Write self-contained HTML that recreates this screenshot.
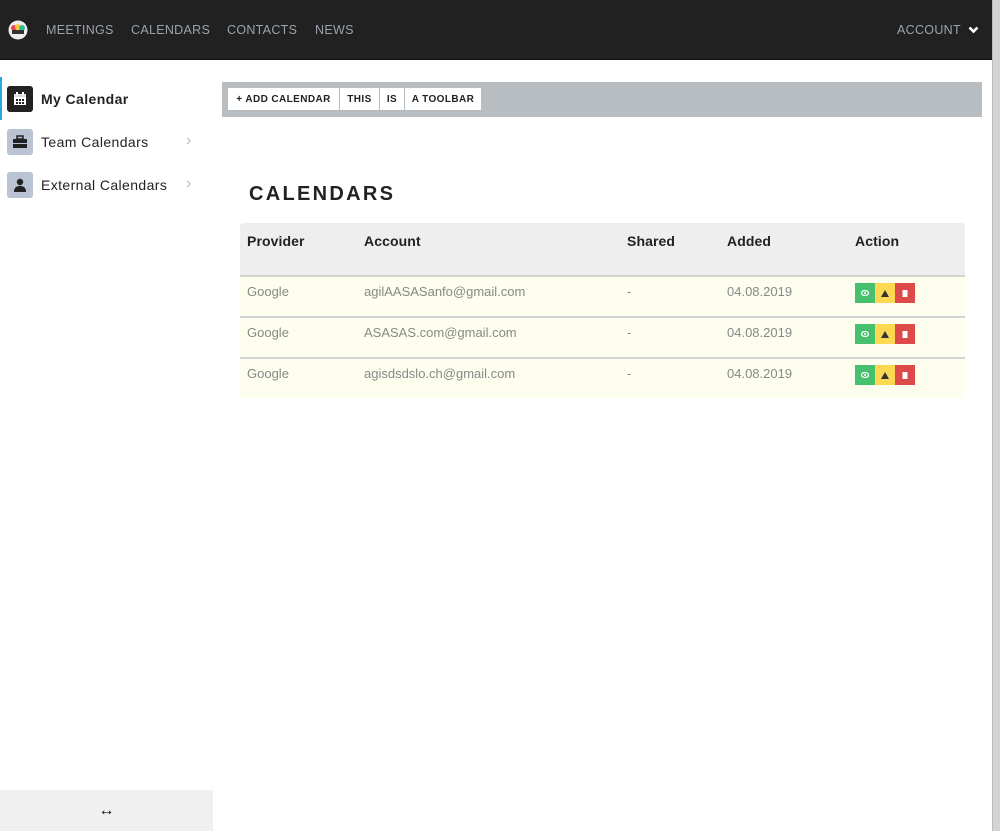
<!DOCTYPE html>
<html><head><meta charset="utf-8"><style>
*{box-sizing:border-box;margin:0;padding:0}
body{width:1000px;height:831px;overflow:hidden;background:#fff;font-family:"Liberation Sans",sans-serif;position:relative}
.nav{position:absolute;left:0;top:0;width:992px;height:60px;background:#212121;border-bottom:1px solid #111}
.nav a{position:absolute;top:23px;color:#9aa3ad;font-size:12.5px;letter-spacing:0.3px}
.sb{position:absolute;right:0;top:0;width:8px;height:831px;background:#d4d4d4;border-left:1px solid #bbb}
.side .it{position:absolute;left:7px;height:26px;display:flex;align-items:center}
.ic{width:26px;height:26px;border-radius:3px;background:#b9c3d3;display:flex;align-items:center;justify-content:center}
.it span{margin-left:8px;font-size:14px;color:#222;letter-spacing:0.4px}
.chev{position:absolute;left:186px;color:#bbb;font-size:16px}
.tb{position:absolute;left:222px;top:82px;width:760px;height:35px;background:#b8bdc2}
.btn{position:absolute;top:6px;height:22px;background:#fff;font-size:10px;font-weight:bold;color:#222;letter-spacing:0.4px;line-height:24px;text-align:center}
h1{position:absolute;left:249px;top:183px;font-size:20px;letter-spacing:2.3px;color:#222;font-weight:bold}
.tbl{position:absolute;left:240px;top:223px;width:725px}
.hd{height:52px;background:#eee;border-radius:4px 4px 0 0;position:relative}
.hd div{position:absolute;top:10px;font-size:14px;font-weight:bold;color:#222;letter-spacing:0.1px}
.row{height:41px;background:#fefeee;border-top:2px solid #d3d3d3;position:relative}
.row div{position:absolute;top:7px;font-size:13px;color:#888;letter-spacing:0}
.act{position:absolute;top:6px;left:615px;display:flex}
.act i{display:flex;width:20px;height:20px;align-items:center;justify-content:center;font-style:normal}
</style></head><body>
<div class="nav">
<svg style="position:absolute;left:8px;top:20px" width="20" height="20" viewBox="0 0 20 20"><circle cx="10" cy="10" r="9.5" fill="#eee"/><circle cx="6" cy="8" r="3" fill="#e45"/><circle cx="10" cy="7" r="3" fill="#fc3"/><circle cx="14" cy="8" r="3" fill="#3b9"/><rect x="4" y="10" width="12" height="4" fill="#333"/></svg>
<a style="left:46px">MEETINGS</a><a style="left:131px">CALENDARS</a><a style="left:227px">CONTACTS</a><a style="left:315px">NEWS</a>
<a style="left:897px">ACCOUNT</a>
<svg style="position:absolute;left:968px;top:26px" width="11" height="8" viewBox="0 0 11 8"><path d="M1.5 1.5L5.5 5.5L9.5 1.5" stroke="#fff" stroke-width="2.6" fill="none"/></svg>
</div>
<div class="sb"></div>
<div class="side">
<div style="position:absolute;left:0;top:77px;width:2px;height:43px;background:#2aa7e0"></div>
<div class="it" style="top:86px"><div class="ic" style="background:#222"><svg width="14" height="14" viewBox="0 0 14 14"><rect x="1" y="2" width="12" height="11" fill="#fff"/><rect x="1" y="2" width="12" height="3" fill="#ddd"/><rect x="3" y="0" width="2" height="3" fill="#fff"/><rect x="9" y="0" width="2" height="3" fill="#fff"/><g fill="#222"><rect x="3" y="7" width="2" height="2"/><rect x="6" y="7" width="2" height="2"/><rect x="9" y="7" width="2" height="2"/><rect x="3" y="10" width="2" height="2"/><rect x="6" y="10" width="2" height="2"/><rect x="9" y="10" width="2" height="2"/></g></svg></div><span style="font-weight:bold">My Calendar</span></div>
<div class="it" style="top:129px"><div class="ic"><svg width="16" height="14" viewBox="0 0 16 14"><rect x="5" y="1" width="6" height="3" fill="none" stroke="#222" stroke-width="1.5"/><rect x="1" y="4" width="14" height="9" fill="#222"/><rect x="1" y="8" width="14" height="1" fill="#b9c3d3"/></svg></div><span>Team Calendars</span></div>
<div class="chev" style="top:132px">›</div>
<div class="it" style="top:172px"><div class="ic"><svg width="14" height="14" viewBox="0 0 14 14"><circle cx="7" cy="4" r="3.2" fill="#222"/><path d="M1 14C1 9 4 8 7 8S13 9 13 14Z" fill="#222"/></svg></div><span>External Calendars</span></div>
<div class="chev" style="top:175px">›</div>
<div style="position:absolute;left:0;top:790px;width:213px;height:41px;background:#f0f0f0;text-align:center;line-height:41px;font-size:16px;color:#111;font-weight:bold">↔</div>
</div>
<div class="tb">
<div class="btn" style="left:6px;width:111px">+ ADD CALENDAR</div>
<div class="btn" style="left:118px;width:39px">THIS</div>
<div class="btn" style="left:158px;width:24px">IS</div>
<div class="btn" style="left:183px;width:76px">A TOOLBAR</div>
</div>
<h1>CALENDARS</h1>
<div class="tbl">
<div class="hd"><div style="left:7px">Provider</div><div style="left:124px">Account</div><div style="left:387px">Shared</div><div style="left:487px">Added</div><div style="left:615px">Action</div></div>
<div class="row"><div style="left:7px">Google</div><div style="left:124px">agilAASASanfo@gmail.com</div><div style="left:387px">-</div><div style="left:487px">04.08.2019</div><span class="act"><i style="background:#47c06e"><svg width="8" height="6"><ellipse cx="4" cy="3" rx="3.5" ry="2.5" fill="none" stroke="#fff" stroke-width="1.2"/><circle cx="4" cy="3" r="1" fill="#fff"/></svg></i><i style="background:#fdd853"><svg width="8" height="7"><path d="M4 0L8 7H0Z" fill="#333"/></svg></i><i style="background:#dc4a4a"><svg width="6" height="8"><rect x="0.5" y="1" width="5" height="7" fill="#fff"/></svg></i></span></div>
<div class="row"><div style="left:7px">Google</div><div style="left:124px">ASASAS.com@gmail.com</div><div style="left:387px">-</div><div style="left:487px">04.08.2019</div><span class="act"><i style="background:#47c06e"><svg width="8" height="6"><ellipse cx="4" cy="3" rx="3.5" ry="2.5" fill="none" stroke="#fff" stroke-width="1.2"/><circle cx="4" cy="3" r="1" fill="#fff"/></svg></i><i style="background:#fdd853"><svg width="8" height="7"><path d="M4 0L8 7H0Z" fill="#333"/></svg></i><i style="background:#dc4a4a"><svg width="6" height="8"><rect x="0.5" y="1" width="5" height="7" fill="#fff"/></svg></i></span></div>
<div class="row"><div style="left:7px">Google</div><div style="left:124px">agisdsdslo.ch@gmail.com</div><div style="left:387px">-</div><div style="left:487px">04.08.2019</div><span class="act"><i style="background:#47c06e"><svg width="8" height="6"><ellipse cx="4" cy="3" rx="3.5" ry="2.5" fill="none" stroke="#fff" stroke-width="1.2"/><circle cx="4" cy="3" r="1" fill="#fff"/></svg></i><i style="background:#fdd853"><svg width="8" height="7"><path d="M4 0L8 7H0Z" fill="#333"/></svg></i><i style="background:#dc4a4a"><svg width="6" height="8"><rect x="0.5" y="1" width="5" height="7" fill="#fff"/></svg></i></span></div>
</div>
</body></html>
